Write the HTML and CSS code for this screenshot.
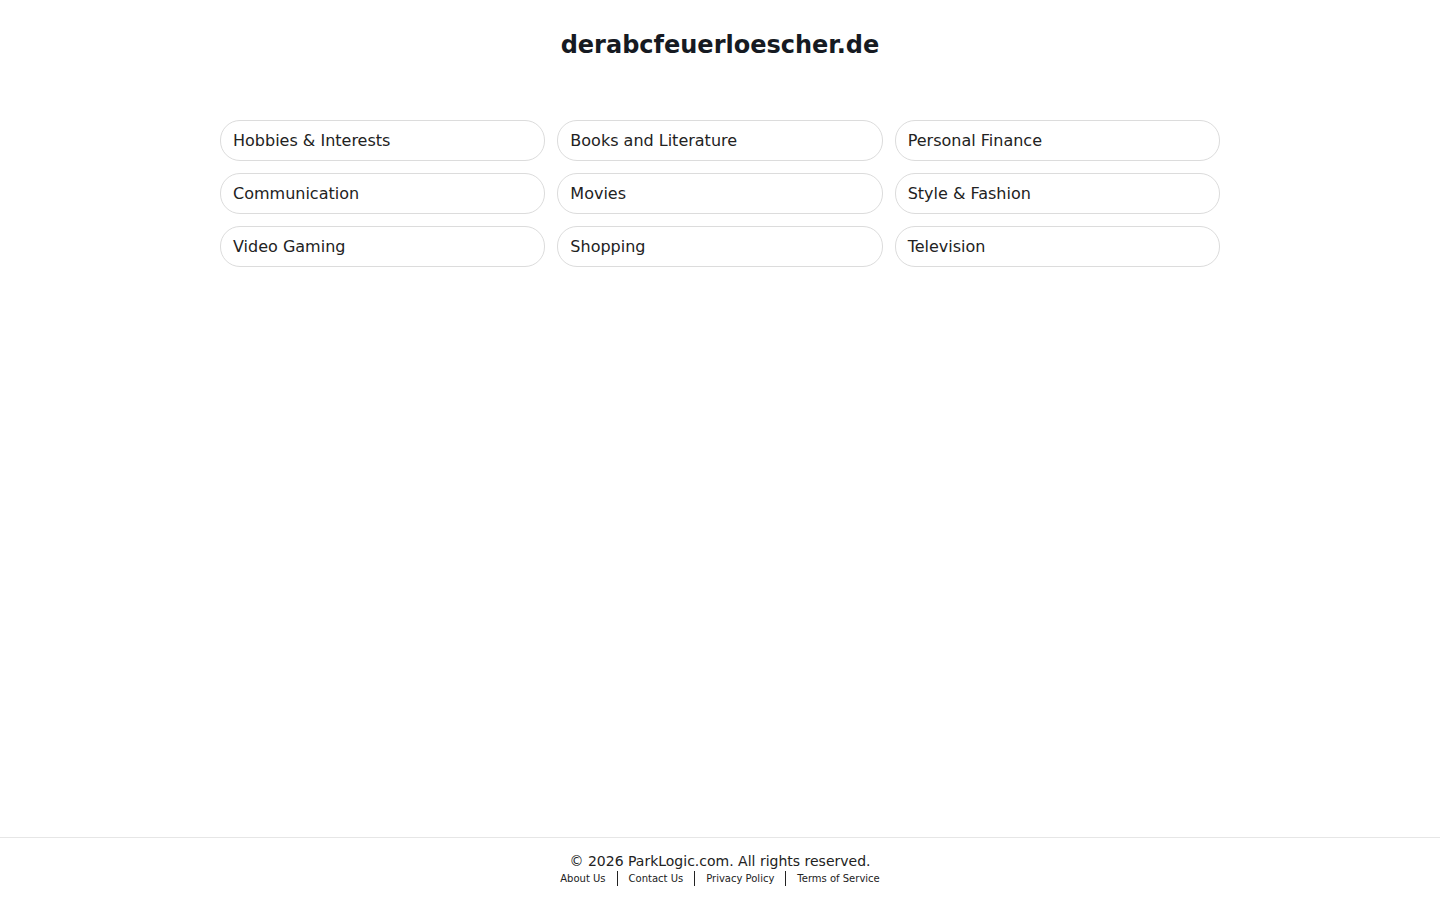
FILE: index.html
```html
<!DOCTYPE html>
<html lang="en">
<head>
<meta charset="utf-8">
<title>derabcfeuerloescher.de</title>
<link rel="stylesheet" href="styles.css">
</head>
<body>
<div class="page">
  <header class="header">
    <h1 class="title">derabcfeuerloescher.de</h1>
  </header>
  <main class="main">
    <div class="grid">
      <a class="item" href="#">Hobbies &amp; Interests</a>
      <a class="item" href="#">Books and Literature</a>
      <a class="item" href="#">Personal Finance</a>
      <a class="item" href="#">Communication</a>
      <a class="item" href="#">Movies</a>
      <a class="item" href="#">Style &amp; Fashion</a>
      <a class="item" href="#">Video Gaming</a>
      <a class="item" href="#">Shopping</a>
      <a class="item" href="#">Television</a>
    </div>
  </main>
  <footer class="footer">
    <div class="copy">© 2026 ParkLogic.com. All rights reserved.</div>
    <div class="links">
      <a href="#">About Us</a><span class="sep"></span><a href="#">Contact Us</a><span class="sep"></span><a href="#">Privacy Policy</a><span class="sep"></span><a href="#">Terms of Service</a>
    </div>
  </footer>
</div>
</body>
</html>
```
FILE: styles.css
```css
html, body {
  margin: 0;
  padding: 0;
  background: #ffffff;
}
body {
  font-family: "DejaVu Sans", sans-serif;
  color: #1f1f1f;
}
.page {
  min-height: 100vh;
  display: flex;
  flex-direction: column;
}
.header {
  padding-top: 31px;
  text-align: center;
}
.title {
  margin: 0;
  font-size: 24px;
  line-height: 28px;
  font-weight: bold;
  color: #161a22;
}
.main {
  padding-top: 61px;
  display: flex;
  justify-content: center;
}
.grid {
  width: 1000px;
  display: grid;
  grid-template-columns: repeat(3, 1fr);
  gap: 12px;
}
.item {
  display: block;
  border: 1px solid #dcdcdc;
  border-radius: 20px;
  height: 39px;
  line-height: 39px;
  padding: 0 12px;
  font-size: 16px;
  color: #222222;
  text-decoration: none;
}
.footer {
  margin-top: auto;
  border-top: 1px solid #e6e6e6;
  padding: 15px 0 13px;
  text-align: center;
}
.copy {
  font-size: 14px;
  line-height: 17px;
  color: #222222;
}
.links {
  display: flex;
  justify-content: center;
  align-items: center;
  font-size: 10px;
  line-height: 17px;
}
.links a {
  color: #222222;
  text-decoration: none;
}
.sep {
  display: inline-block;
  width: 1px;
  height: 15px;
  background: #222222;
  margin: 0 11px;
}
```
